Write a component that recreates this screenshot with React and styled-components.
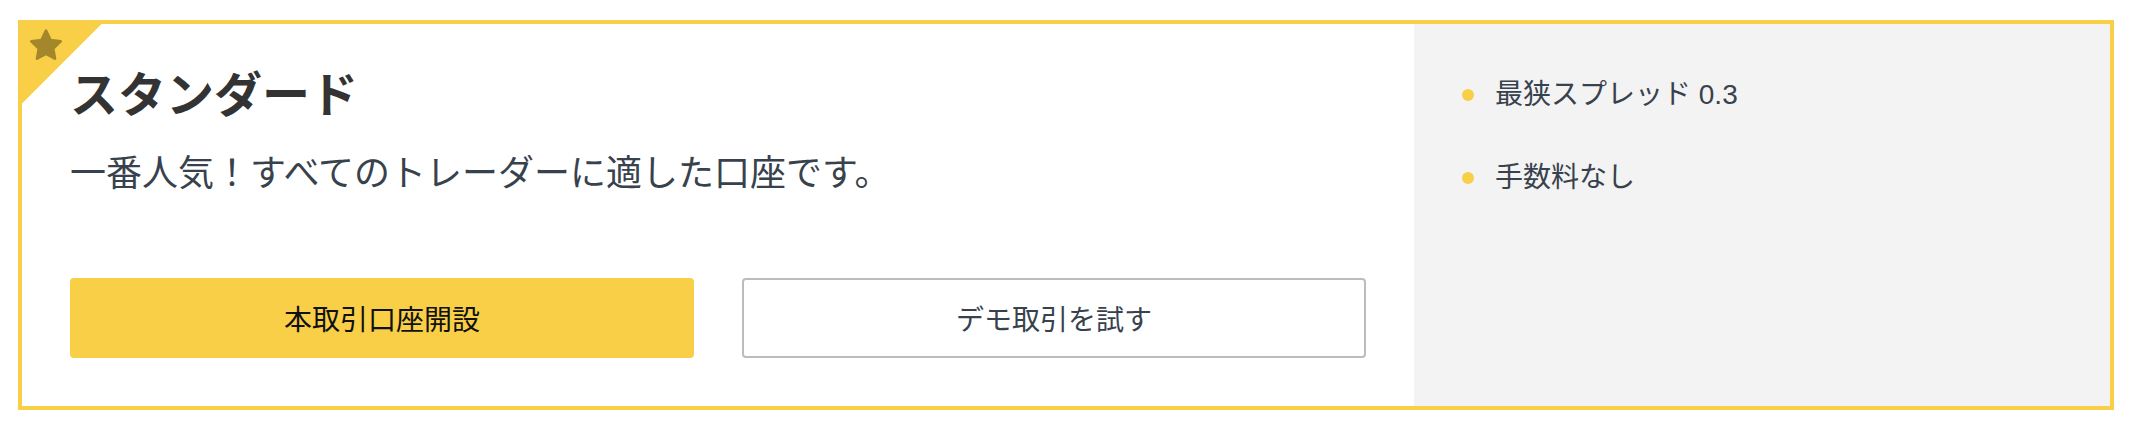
import React from 'react'
import styled, { createGlobalStyle } from 'styled-components'

const GlobalStyle = createGlobalStyle`
    html, body {
        margin: 0;
        padding: 0;
        background: #fff;
    }
    body {
        font-family: "Liberation Sans", "Noto Sans CJK JP", sans-serif;
    }
`

const Page = styled.div`
    padding: 20px 22px 16px 18px;
`

const Card = styled.div`
    position: relative;
    height: 390px;
    box-sizing: border-box;
    border: 4px solid #f8cf47;
    display: grid;
    grid-template-columns: 2fr 1fr;
    overflow: hidden;
`

const Ribbon = styled.div`
    position: absolute;
    top: 0;
    left: 0;
    width: 80px;
    height: 80px;
    background: linear-gradient(135deg, #f8cf47 50%, transparent 50%);
    svg {
        position: absolute;
        top: 2px;
        left: 4px;
    }
`

const Main = styled.div`
    padding: 48px;
    display: flex;
    flex-direction: column;
    background: #fff;
`

const Title = styled.h2`
    margin: 0;
    font-size: 48px;
    line-height: 1;
    font-weight: 700;
    color: #333;
`

const Lead = styled.p`
    margin: 36px 0 0;
    font-size: 36px;
    line-height: 1;
    color: #38424d;
`

const Actions = styled.div`
    margin-top: auto;
    display: grid;
    grid-template-columns: 1fr 1fr;
    gap: 48px;
`

const Button = styled.a`
    height: 80px;
    box-sizing: border-box;
    display: flex;
    align-items: center;
    justify-content: center;
    border-radius: 4px;
    font-size: 28px;
    text-decoration: none;
    cursor: pointer;
    background: ${p => (p.$primary ? '#f8cf47' : '#fff')};
    color: ${p => (p.$primary ? '#111' : '#38424d')};
    border: 2px solid ${p => (p.$primary ? '#f8cf47' : '#bcbcbc')};
`

const Side = styled.ul`
    margin: 0;
    list-style: none;
    background: #f3f3f3;
    padding: 49px 48px;
`

const Feature = styled.li`
    display: flex;
    align-items: center;
    font-size: 28px;
    line-height: 44px;
    color: #38424d;
    & + & {
        margin-top: 39px;
    }
    &::before {
        content: '';
        width: 12px;
        height: 12px;
        border-radius: 50%;
        background: #f8cf47;
        margin-right: 21px;
        flex-shrink: 0;
    }
`

const features = ['最狭スプレッド 0.3', '手数料なし']

export default function App() {
    return (
        <>
            <GlobalStyle />
            <Page>
                <Card>
                    <Ribbon>
                        <svg width='40' height='40' viewBox='0 0 24 24'>
                            <path
                                d='M12 2.8l2.7 5.6 6.1.8-4.5 4.3 1.1 6.1L12 16.7l-5.4 2.9 1.1-6.1-4.5-4.3 6.1-.8z'
                                fill='#a3872a'
                                stroke='#a3872a'
                                strokeWidth='1.6'
                                strokeLinejoin='round'
                            />
                        </svg>
                    </Ribbon>
                    <Main>
                        <Title>スタンダード</Title>
                        <Lead>一番人気！すべてのトレーダーに適した口座です。</Lead>
                        <Actions>
                            <Button $primary>本取引口座開設</Button>
                            <Button>デモ取引を試す</Button>
                        </Actions>
                    </Main>
                    <Side>
                        {features.map(f => (
                            <Feature key={f}>{f}</Feature>
                        ))}
                    </Side>
                </Card>
            </Page>
        </>
    )
}
